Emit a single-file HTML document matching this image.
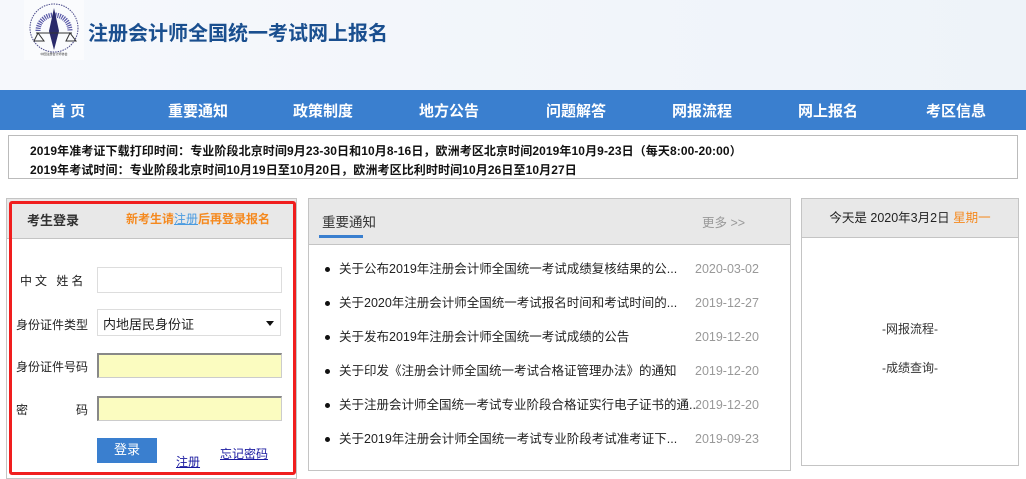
<!DOCTYPE html>
<html><head><meta charset="utf-8"><style>
*{margin:0;padding:0;box-sizing:border-box}
body{width:1026px;height:479px;overflow:hidden;background:#fff;font-family:"Liberation Sans","Noto Sans CJK SC",sans-serif;font-size:12px;color:#333;position:relative}
.abs{position:absolute}
#hdr{left:0;top:0;width:1026px;height:90px;background:linear-gradient(90deg,#f6f8fc,#eef3f9)}
#title{left:88px;top:17px;font-size:20px;font-weight:bold;color:#1a4f8f}
#nav{left:0;top:90px;width:1026px;height:40px;background:#3a7fcf}
#nav span{position:absolute;top:10px;color:#fff;font-size:15px;font-weight:bold;transform:translateX(-50%);white-space:nowrap}
#notice{left:8px;top:135px;width:1010px;height:44px;border:1px solid #bbb;font-weight:bold;font-size:12px;color:#111;padding:6px 0 0 21px;line-height:19px;letter-spacing:0.1px}
.panel{border:1px solid #c4c4c4;background:#fff}
.gh{background:#e8e8e8;border-bottom:1px solid #c4c4c4}
input.t{position:absolute;left:97px;width:185px;height:26px;border:1px solid #ddd;background:#fff}
input.y{background:#fbfcc0;border:1px solid #ccc;border-top:2px solid #888;border-left:2px solid #888}
.lbl{position:absolute;left:16px;font-size:12px;color:#222}
.news{position:absolute;left:16px;font-size:12.5px;color:#222;white-space:nowrap;width:460px;line-height:18px}
.news b{display:inline-block;width:5px;height:5px;border-radius:50%;background:#111;margin-right:9px;vertical-align:middle}
.news i{position:absolute;left:370px;top:0;font-style:normal;color:#999;line-height:18px}
</style></head><body>
<div id="hdr" class="abs"></div>
<svg class="abs" style="left:24px;top:0px" width="60" height="60" viewBox="0 0 60 60">
<rect width="60" height="60" fill="#fafbfd"/>
<circle cx="30" cy="28" r="24" fill="none" stroke="#4a4a8a" stroke-width="1" stroke-dasharray="1.5 1"/>
<path d="M14 31 A16 16 0 0 1 46 31" fill="none" stroke="#5a5aa8" stroke-width="5" stroke-dasharray="1.2 1"/>
<path d="M30 8 L25 31 L30 50 L35 31 Z" fill="#2a2a6a"/>
<path d="M12 33 H48 M14 33 L10 41 H20 Z M46 33 L42 41 H52 Z" stroke="#333" fill="none" stroke-width="1"/>
<text x="30" y="55" font-size="3" text-anchor="middle" fill="#333">中国注册会计师协会</text>
</svg>
<div id="title" class="abs">注册会计师全国统一考试网上报名</div>
<div id="nav" class="abs">
<span style="left:68px">首 页</span><span style="left:198px">重要通知</span><span style="left:323px">政策制度</span><span style="left:449px">地方公告</span><span style="left:576px">问题解答</span><span style="left:702px">网报流程</span><span style="left:828px">网上报名</span><span style="left:956px">考区信息</span>
</div>
<div id="notice" class="abs">2019年准考证下载打印时间：专业阶段北京时间9月23-30日和10月8-16日，欧洲考区北京时间2019年10月9-23日（每天8:00-20:00）<br>2019年考试时间：专业阶段北京时间10月19日至10月20日，欧洲考区比利时时间10月26日至10月27日</div>

<div class="abs panel" style="left:6px;top:198px;width:291px;height:281px"></div>
<div class="abs gh" style="left:7px;top:199px;width:289px;height:40px"></div>
<div class="abs" style="left:9px;top:201px;width:287px;height:274px;border:3px solid #f01e1e;border-radius:3px"></div>
<div class="abs" style="left:27px;top:210px;font-size:13px;font-weight:bold;color:#333">考生登录</div>
<div class="abs" style="left:126px;top:210px;font-size:12px;font-weight:bold;color:#f5891e">新考生请<span style="color:#4a9be0;text-decoration:underline;font-weight:normal">注册</span>后再登录报名</div>
<div class="lbl" style="top:272px;letter-spacing:3px;left:20px">中文 姓名</div>
<input class="t" style="top:267px">
<div class="lbl" style="top:316px">身份证件类型</div>
<div class="abs" style="left:97px;top:309px;width:184px;height:27px;border:1px solid #ddd;font-size:13px;padding:4px 5px;color:#222">内地居民身份证<span style="position:absolute;right:6px;top:11px;border:4px solid transparent;border-top:5px solid #111"></span></div>
<div class="lbl" style="top:358px">身份证件号码</div>
<input class="t y" style="top:353px;height:25px">
<div class="lbl" style="top:401px">密</div><div class="lbl" style="top:401px;left:76px">码</div>
<input class="t y" style="top:396px;height:25px">
<div class="abs" style="left:97px;top:438px;width:60px;height:25px;background:#3a7fcf;color:#fff;text-align:center;line-height:24px;font-size:13px">登录</div>
<div class="abs" style="left:176px;top:453px;font-size:12px;color:#1a1aa0;text-decoration:underline">注册</div>
<div class="abs" style="left:220px;top:445px;font-size:12px;color:#1a1aa0;text-decoration:underline">忘记密码</div>

<div class="abs panel" style="left:308px;top:198px;width:483px;height:273px">
<div class="gh" style="height:46px;position:relative">
<div style="position:absolute;left:13px;top:12px;font-size:13.5px;color:#333">重要通知</div>
<div style="position:absolute;left:10px;top:36px;width:44px;height:3px;background:#3a7fcf"></div>
<div style="position:absolute;left:393px;top:13px;font-size:12.5px;color:#999">更多 &gt;&gt;</div>
</div>
<div class="news" style="top:61px"><b></b>关于公布2019年注册会计师全国统一考试成绩复核结果的公...<i>2020-03-02</i></div>
<div class="news" style="top:95px"><b></b>关于2020年注册会计师全国统一考试报名时间和考试时间的...<i>2019-12-27</i></div>
<div class="news" style="top:129px"><b></b>关于发布2019年注册会计师全国统一考试成绩的公告<i>2019-12-20</i></div>
<div class="news" style="top:163px"><b></b>关于印发《注册会计师全国统一考试合格证管理办法》的通知<i>2019-12-20</i></div>
<div class="news" style="top:197px"><b></b>关于注册会计师全国统一考试专业阶段合格证实行电子证书的通...<i>2019-12-20</i></div>
<div class="news" style="top:231px"><b></b>关于2019年注册会计师全国统一考试专业阶段考试准考证下...<i>2019-09-23</i></div>
</div>

<div class="abs panel" style="left:801px;top:198px;width:218px;height:268px">
<div class="gh" style="height:39px;text-align:center;line-height:38px;font-size:12.5px;color:#222">今天是 2020年3月2日 <span style="color:#f5891e">星期一</span></div>
<div style="position:absolute;top:121px;width:100%;text-align:center;color:#333">-网报流程-</div>
<div style="position:absolute;top:160px;width:100%;text-align:center;color:#333">-成绩查询-</div>
</div>
</body></html>
